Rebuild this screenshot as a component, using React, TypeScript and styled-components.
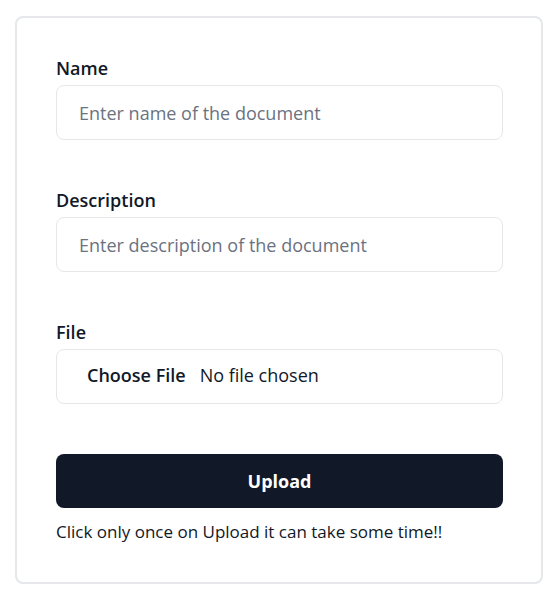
import React from "react";
import styled, { createGlobalStyle } from "styled-components";

const Global = createGlobalStyle`
  html, body { margin: 0; padding: 0; background: #ffffff; }
  body { font-family: "Open Sans", "Noto Sans", sans-serif; color: #111827; }
  * { box-sizing: border-box; }
`;

const Page = styled.div`
  padding: 16px 14px 12px 15px;
`;

const Card = styled.form`
  border: 2px solid #e5e7eb;
  border-radius: 8px;
  padding: 38px 38px 38px 39px;
  display: flex;
  flex-direction: column;
`;

const Field = styled.div`
  display: flex;
  flex-direction: column;
  gap: 5px;
  margin-bottom: 48px;
`;

const Label = styled.label`
  font-size: 18px;
  line-height: 24px;
  font-weight: 600;
  color: #111827;
`;

const TextInput = styled.input`
  height: 55px;
  width: 100%;
  border: 1px solid #e5e7eb;
  border-radius: 8px;
  padding: 0 22px;
  font-family: inherit;
  font-size: 18px;
  color: #111827;
  outline: none;
  &::placeholder { color: #6b7280; }
`;

const FileInput = styled.input`
  height: 55px;
  width: 100%;
  border: 1px solid #e5e7eb;
  border-radius: 8px;
  padding: 13px 22px 0 30px;
  font-family: inherit;
  font-size: 18px;
  color: #111827;
  &::file-selector-button {
    font-family: inherit;
    font-size: 18px;
    font-weight: 600;
    color: #111827;
    background: transparent;
    border: 0;
    padding: 0;
    margin-right: 14px;
  }
`;

const Button = styled.button`
  margin-top: 2px;
  height: 54px;
  width: 100%;
  border: 0;
  border-radius: 8px;
  background: #111827;
  color: #ffffff;
  font-family: inherit;
  font-size: 18px;
  font-weight: 700;
`;

const Note = styled.p`
  margin: 12px 0 0;
  font-size: 17px;
  line-height: 24px;
  color: #111827;
`;

export default function App() {
  return (
    <Page>
      <Global />
      <Card onSubmit={(e) => e.preventDefault()}>
        <Field>
          <Label htmlFor="name">Name</Label>
          <TextInput id="name" placeholder="Enter name of the document" />
        </Field>
        <Field>
          <Label htmlFor="desc">Description</Label>
          <TextInput id="desc" placeholder="Enter description of the document" />
        </Field>
        <Field>
          <Label htmlFor="file">File</Label>
          <FileInput id="file" type="file" />
        </Field>
        <Button type="submit">Upload</Button>
        <Note>Click only once on Upload it can take some time!!</Note>
      </Card>
    </Page>
  );
}
